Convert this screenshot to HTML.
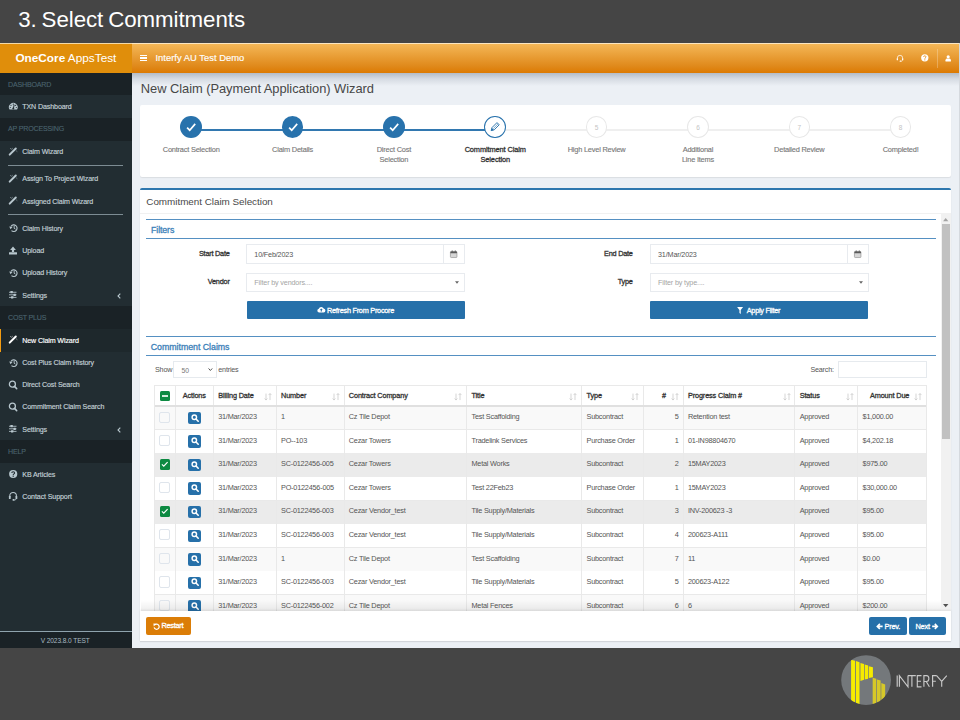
<!DOCTYPE html><html><head><meta charset="utf-8"><title>Select Commitments</title><style>
*{box-sizing:border-box;margin:0;padding:0}
html,body{width:960px;height:720px;overflow:hidden;background:#454545;font-family:"Liberation Sans",sans-serif}
.a{position:absolute}
.t{position:absolute;white-space:nowrap}
svg{position:absolute;overflow:visible}
.sh{color:#4b646f;font-size:7.1px;letter-spacing:-0.2px;-webkit-text-stroke:0.1px #4b646f}
.si{color:#c2d0d6;font-size:7.1px;letter-spacing:-0.12px;-webkit-text-stroke:0.15px currentColor}
</style></head><body>
<div class="t" style="left:18.2px;top:4.9px;line-height:30px;font-size:22.3px;color:#fff;letter-spacing:-0.06px;word-spacing:-1.2px">3. Select Commitments</div>
<div class="a" style="left:0px;top:43px;width:960px;height:605px;background:#ecf0f5"></div>
<div class="a" style="left:0px;top:43px;width:131.5px;height:29.6px;background:#e08e0b;border-top:1px solid #f3d9a8"></div>
<div class="a" style="left:131.5px;top:72.5px;width:828.5px;height:13.5px;background:linear-gradient(rgba(50,65,90,.30),rgba(50,65,90,.12) 45%,rgba(50,65,90,0))"></div>
<div class="a" style="left:131.5px;top:43px;width:828.5px;height:29.6px;background:linear-gradient(#f4b757,#e08a1c 75%,#dc7a02);border-top:1px solid #fbe6c2"></div>
<div class="t" style="left:15.4px;top:51.4px;line-height:14px;font-size:11.8px;color:#fff"><b>OneCore</b> AppsTest</div>
<div class="a" style="left:140.1px;top:54.9px;width:6.7px;height:1.4px;background:#fff"></div>
<div class="a" style="left:140.1px;top:57.2px;width:6.7px;height:1.4px;background:#fff"></div>
<div class="a" style="left:140.1px;top:59.5px;width:6.7px;height:1.4px;background:#fff"></div>
<div class="t" style="left:155.5px;top:52.2px;line-height:12px;font-size:9.4px;color:#fff;letter-spacing:0.02px;-webkit-text-stroke:0.15px #fff">Interfy AU Test Demo</div>
<div class="a" style="left:0px;top:72.6px;width:131.5px;height:575.4px;background:#222d32"></div>
<div class="a" style="left:0px;top:73px;width:131.5px;height:22.4px;background:#1a2226"></div>
<div class="t sh" style="left:8px;top:78.5px;line-height:12px;">DASHBOARD</div>
<div class="t si" style="left:22.3px;top:100.9px;line-height:12px;">TXN Dashboard</div>
<svg style="left:8px;top:101.3px;" width="10" height="10" viewBox="0 0 20 20"><path d="M3.1 17.2 A8.8 8.8 0 1 1 18.1 17.2 Z" fill="#b8c7ce"/><circle cx="10.6" cy="6.3" r="1.2" fill="#222d32"/><circle cx="6" cy="8.6" r="1.2" fill="#222d32"/><circle cx="15.2" cy="8.6" r="1.2" fill="#222d32"/><circle cx="4.6" cy="13" r="1.1" fill="#222d32"/><circle cx="16.6" cy="13" r="1.1" fill="#222d32"/><path d="M10.6 15.5 L12.4 7.5" stroke="#222d32" stroke-width="2"/><circle cx="10.6" cy="15" r="2" fill="#222d32"/></svg>
<div class="a" style="left:0px;top:117.5px;width:131.5px;height:23.3px;background:#1a2226"></div>
<div class="t sh" style="left:8px;top:123.45px;line-height:12px;">AP PROCESSING</div>
<div class="t si" style="left:22.3px;top:146.1px;line-height:12px;">Claim Wizard</div>
<svg style="left:8px;top:146.5px;" width="10" height="10" viewBox="0 0 20 20"><path d="M3.4 15.2 L15.6 3" stroke="#b8c7ce" stroke-width="4" stroke-linecap="round"/><path d="M4 2.2 L7.2 5.2 M8.6 1.8 L8.2 4.6 M16.4 7.6 L18.6 9.4" stroke="#b8c7ce" stroke-width="1.4" opacity=".7"/></svg>
<div class="a" style="left:8.3px;top:164.8px;width:114.7px;height:1px;background:#7d8c93"></div>
<div class="t si" style="left:22.3px;top:173.3px;line-height:12px;">Assign To Project Wizard</div>
<svg style="left:8px;top:173.7px;" width="10" height="10" viewBox="0 0 20 20"><path d="M3.4 15.2 L15.6 3" stroke="#b8c7ce" stroke-width="4" stroke-linecap="round"/><path d="M4 2.2 L7.2 5.2 M8.6 1.8 L8.2 4.6 M16.4 7.6 L18.6 9.4" stroke="#b8c7ce" stroke-width="1.4" opacity=".7"/></svg>
<div class="t si" style="left:22.3px;top:195.9px;line-height:12px;">Assigned Claim Wizard</div>
<svg style="left:8px;top:196.3px;" width="10" height="10" viewBox="0 0 20 20"><path d="M3.4 15.2 L15.6 3" stroke="#b8c7ce" stroke-width="4" stroke-linecap="round"/><path d="M4 2.2 L7.2 5.2 M8.6 1.8 L8.2 4.6 M16.4 7.6 L18.6 9.4" stroke="#b8c7ce" stroke-width="1.4" opacity=".7"/></svg>
<div class="a" style="left:8.3px;top:214px;width:114.7px;height:1px;background:#7d8c93"></div>
<div class="t si" style="left:22.3px;top:222.9px;line-height:12px;">Claim History</div>
<svg style="left:8px;top:223.3px;" width="10" height="10" viewBox="0 0 20 20"><path d="M6.2 6.5 A6.6 6.6 0 1 1 7 15.2" fill="none" stroke="#b8c7ce" stroke-width="2.3"/><path d="M2.6 7 L9.4 7.4 L5 12.4 Z" fill="#b8c7ce"/><path d="M12.3 6 L12.3 10.6 L15 12.2" fill="none" stroke="#b8c7ce" stroke-width="1.9"/></svg>
<div class="t si" style="left:22.3px;top:245.1px;line-height:12px;">Upload</div>
<svg style="left:8px;top:245.5px;" width="10" height="10" viewBox="0 0 20 20"><path d="M10 1 L15.8 8 L12.2 8 L12.2 12 L7.8 12 L7.8 8 L4.2 8 Z" fill="#b8c7ce"/><rect x="2" y="12.4" width="16" height="4.8" rx="0.6" fill="#b8c7ce"/></svg>
<div class="t si" style="left:22.3px;top:267.4px;line-height:12px;">Upload History</div>
<svg style="left:8px;top:267.8px;" width="10" height="10" viewBox="0 0 20 20"><path d="M6.2 6.5 A6.6 6.6 0 1 1 7 15.2" fill="none" stroke="#b8c7ce" stroke-width="2.3"/><path d="M2.6 7 L9.4 7.4 L5 12.4 Z" fill="#b8c7ce"/><path d="M12.3 6 L12.3 10.6 L15 12.2" fill="none" stroke="#b8c7ce" stroke-width="1.9"/></svg>
<div class="t si" style="left:22.3px;top:289.8px;line-height:12px;">Settings</div>
<svg style="left:8px;top:290.2px;" width="10" height="10" viewBox="0 0 20 20"><rect x="2" y="3.6" width="15" height="1.7" fill="#b8c7ce"/><rect x="2" y="8.8" width="15" height="1.7" fill="#b8c7ce"/><rect x="2" y="13.8" width="15" height="1.7" fill="#b8c7ce"/><rect x="5" y="2.2" width="4.6" height="4.5" rx=".5" fill="#b8c7ce"/><rect x="11" y="7.4" width="4.6" height="4.5" rx=".5" fill="#b8c7ce"/><rect x="6" y="12.4" width="4.6" height="4.5" rx=".5" fill="#b8c7ce"/></svg>
<svg style="left:116.8px;top:292.6px;" width="4" height="6" viewBox="0 0 4 6"><path d="M3.3 .6 L1 3 L3.3 5.4" fill="none" stroke="#b8c7ce" stroke-width="1.1"/></svg>
<div class="a" style="left:0px;top:306.2px;width:131.5px;height:22.7px;background:#1a2226"></div>
<div class="t sh" style="left:8px;top:311.85px;line-height:12px;">COST PLUS</div>
<div class="a" style="left:0px;top:329px;width:131.5px;height:22.6px;background:#1e282c;border-left:1.6px solid #f39c12"></div>
<div class="t si" style="left:22.3px;top:334.9px;line-height:12px;color:#fff">New Claim Wizard</div>
<svg style="left:8px;top:335.3px;" width="10" height="10" viewBox="0 0 20 20"><path d="M3.4 15.2 L15.6 3" stroke="#fff" stroke-width="4" stroke-linecap="round"/><path d="M4 2.2 L7.2 5.2 M8.6 1.8 L8.2 4.6 M16.4 7.6 L18.6 9.4" stroke="#fff" stroke-width="1.4" opacity=".7"/></svg>
<div class="t si" style="left:22.3px;top:357.2px;line-height:12px;">Cost Plus Claim History</div>
<svg style="left:8px;top:357.6px;" width="10" height="10" viewBox="0 0 20 20"><path d="M6.2 6.5 A6.6 6.6 0 1 1 7 15.2" fill="none" stroke="#b8c7ce" stroke-width="2.3"/><path d="M2.6 7 L9.4 7.4 L5 12.4 Z" fill="#b8c7ce"/><path d="M12.3 6 L12.3 10.6 L15 12.2" fill="none" stroke="#b8c7ce" stroke-width="1.9"/></svg>
<div class="t si" style="left:22.3px;top:379.2px;line-height:12px;">Direct Cost Search</div>
<svg style="left:8px;top:379.6px;" width="10" height="10" viewBox="0 0 20 20"><circle cx="8.8" cy="8.4" r="6" fill="none" stroke="#b8c7ce" stroke-width="2.6"/><path d="M13 12.8 L17.4 17.2" stroke="#b8c7ce" stroke-width="3" stroke-linecap="round"/></svg>
<div class="t si" style="left:22.3px;top:401.3px;line-height:12px;">Commitment Claim Search</div>
<svg style="left:8px;top:401.7px;" width="10" height="10" viewBox="0 0 20 20"><circle cx="8.8" cy="8.4" r="6" fill="none" stroke="#b8c7ce" stroke-width="2.6"/><path d="M13 12.8 L17.4 17.2" stroke="#b8c7ce" stroke-width="3" stroke-linecap="round"/></svg>
<div class="t si" style="left:22.3px;top:423.8px;line-height:12px;">Settings</div>
<svg style="left:8px;top:424.2px;" width="10" height="10" viewBox="0 0 20 20"><rect x="2" y="3.6" width="15" height="1.7" fill="#b8c7ce"/><rect x="2" y="8.8" width="15" height="1.7" fill="#b8c7ce"/><rect x="2" y="13.8" width="15" height="1.7" fill="#b8c7ce"/><rect x="5" y="2.2" width="4.6" height="4.5" rx=".5" fill="#b8c7ce"/><rect x="11" y="7.4" width="4.6" height="4.5" rx=".5" fill="#b8c7ce"/><rect x="6" y="12.4" width="4.6" height="4.5" rx=".5" fill="#b8c7ce"/></svg>
<svg style="left:116.8px;top:426.6px;" width="4" height="6" viewBox="0 0 4 6"><path d="M3.3 .6 L1 3 L3.3 5.4" fill="none" stroke="#b8c7ce" stroke-width="1.1"/></svg>
<div class="a" style="left:0px;top:440px;width:131.5px;height:22.5px;background:#1a2226"></div>
<div class="t sh" style="left:8px;top:445.55px;line-height:12px;">HELP</div>
<div class="t si" style="left:22.3px;top:468.8px;line-height:12px;">KB Articles</div>
<svg style="left:8px;top:469.2px;" width="10" height="10" viewBox="0 0 20 20"><circle cx="10.4" cy="10" r="8.2" fill="#b8c7ce"/><path d="M7.6 7.8 C7.6 4.6 13.2 4.6 13.2 7.8 C13.2 9.8 10.4 9.6 10.4 12" fill="none" stroke="#222d32" stroke-width="2.2"/><rect x="9.2" y="13.2" width="2.4" height="2.4" fill="#222d32"/></svg>
<div class="t si" style="left:22.3px;top:490.8px;line-height:12px;">Contact Support</div>
<svg style="left:8px;top:491.2px;" width="10" height="10" viewBox="0 0 20 20"><path d="M3.6 12.5 L3.6 9.6 A6.6 6.6 0 0 1 16.8 9.6 L16.8 12.5" fill="none" stroke="#b8c7ce" stroke-width="2.2"/><rect x="1.8" y="10" width="3.6" height="6" rx="1.2" fill="#b8c7ce"/><rect x="15" y="10" width="3.6" height="6" rx="1.2" fill="#b8c7ce"/><path d="M16.2 15.5 Q16 18.2 12.5 18.2" fill="none" stroke="#b8c7ce" stroke-width="1.6"/><rect x="9" y="16.2" width="4.2" height="3.2" rx="1.2" fill="#b8c7ce"/></svg>
<div class="a" style="left:0px;top:631.2px;width:131.5px;height:1px;background:#8fa3ad"></div>
<div class="a" style="left:0px;top:632.2px;width:131.5px;height:15.8px;background:#1a2226"></div>
<div class="t" style="left:5.2px;width:120px;text-align:center;top:636.4px;line-height:10px;font-size:6.6px;color:#a9b9c1;letter-spacing:-0.1px">V 2023.8.0 TEST</div>
<div class="t" style="left:140.8px;top:81.4px;line-height:16px;font-size:12.9px;color:#474747;letter-spacing:-0.05px">New Claim (Payment Application) Wizard</div>
<div class="a" style="left:140.2px;top:104.6px;width:810.8px;height:72.4px;background:#fff;border-radius:2px;box-shadow:0 1px 1px rgba(0,0,0,.08)"></div>
<div class="a" style="left:191.2px;top:129.2px;width:304.05px;height:1.9px;background:#3278b0"></div>
<div class="a" style="left:495.25px;top:129.4px;width:405.4px;height:1.4px;background:#efefef"></div>
<div class="a" style="left:180.3px;top:116.4px;width:21.8px;height:21.8px;background:#2872ac;border-radius:50%"></div>
<svg style="left:186.2px;top:122.8px;" width="10" height="9" viewBox="0 0 20 18"><path d="M2.2 9.4 L7.4 14.4 L18.4 1.8" fill="none" stroke="#fff" stroke-width="3.4"/></svg>
<div class="a" style="left:281.65px;top:116.4px;width:21.8px;height:21.8px;background:#2872ac;border-radius:50%"></div>
<svg style="left:287.55px;top:122.8px;" width="10" height="9" viewBox="0 0 20 18"><path d="M2.2 9.4 L7.4 14.4 L18.4 1.8" fill="none" stroke="#fff" stroke-width="3.4"/></svg>
<div class="a" style="left:383px;top:116.4px;width:21.8px;height:21.8px;background:#2872ac;border-radius:50%"></div>
<svg style="left:388.9px;top:122.8px;" width="10" height="9" viewBox="0 0 20 18"><path d="M2.2 9.4 L7.4 14.4 L18.4 1.8" fill="none" stroke="#fff" stroke-width="3.4"/></svg>
<div class="a" style="left:484.45px;top:116.4px;width:21.6px;height:21.8px;background:#fff;border:1.3px solid #2872ac;border-radius:50%"></div>
<svg style="left:490.15px;top:121.1px;" width="10.6" height="10.6" viewBox="0 0 20 20"><path d="M2.2 18.2 L3.8 12.4 L13.2 3 L17.4 7.2 L8 16.6 Z" fill="none" stroke="#2872ac" stroke-width="1.8" stroke-linejoin="round"/><path d="M6.2 14.4 L15.2 5.4" stroke="#2872ac" stroke-width="1.1"/><path d="M2.2 18.2 L3.6 13.2 L7.2 16.8 Z" fill="#2872ac"/></svg>
<div class="a" style="left:585.8px;top:116.4px;width:21.6px;height:21.8px;background:#fff;border:1px solid #e8e8e8;border-radius:50%"></div>
<div class="t" style="left:586.6px;width:20px;text-align:center;top:123px;line-height:10px;font-size:6.5px;color:#c4c4c4">5</div>
<div class="a" style="left:687.15px;top:116.4px;width:21.6px;height:21.8px;background:#fff;border:1px solid #e8e8e8;border-radius:50%"></div>
<div class="t" style="left:687.95px;width:20px;text-align:center;top:123px;line-height:10px;font-size:6.5px;color:#c4c4c4">6</div>
<div class="a" style="left:788.5px;top:116.4px;width:21.6px;height:21.8px;background:#fff;border:1px solid #e8e8e8;border-radius:50%"></div>
<div class="t" style="left:789.3px;width:20px;text-align:center;top:123px;line-height:10px;font-size:6.5px;color:#c4c4c4">7</div>
<div class="a" style="left:889.85px;top:116.4px;width:21.6px;height:21.8px;background:#fff;border:1px solid #e8e8e8;border-radius:50%"></div>
<div class="t" style="left:890.65px;width:20px;text-align:center;top:123px;line-height:10px;font-size:6.5px;color:#c4c4c4">8</div>
<div class="t" style="left:141.2px;width:100px;text-align:center;top:144.8px;line-height:10px;font-size:7.4px;letter-spacing:-0.2px;color:#777;-webkit-text-stroke:0.12px #777">Contract Selection</div>
<div class="t" style="left:242.55px;width:100px;text-align:center;top:144.8px;line-height:10px;font-size:7.4px;letter-spacing:-0.2px;color:#777;-webkit-text-stroke:0.12px #777">Claim Details</div>
<div class="t" style="left:343.9px;width:100px;text-align:center;top:144.8px;line-height:10px;font-size:7.4px;letter-spacing:-0.2px;color:#777;-webkit-text-stroke:0.12px #777">Direct Cost</div>
<div class="t" style="left:343.9px;width:100px;text-align:center;top:155.3px;line-height:10px;font-size:7.4px;letter-spacing:-0.2px;color:#777;-webkit-text-stroke:0.12px #777">Selection</div>
<div class="t" style="left:445.25px;width:100px;text-align:center;top:144.8px;line-height:10px;font-size:7.4px;letter-spacing:-0.2px;color:#333;letter-spacing:-0.1px;-webkit-text-stroke:0.3px #333">Commitment Claim</div>
<div class="t" style="left:445.25px;width:100px;text-align:center;top:155.3px;line-height:10px;font-size:7.4px;letter-spacing:-0.2px;color:#333;letter-spacing:-0.1px;-webkit-text-stroke:0.3px #333">Selection</div>
<div class="t" style="left:546.6px;width:100px;text-align:center;top:144.8px;line-height:10px;font-size:7.4px;letter-spacing:-0.2px;color:#777;-webkit-text-stroke:0.12px #777">High Level Review</div>
<div class="t" style="left:647.95px;width:100px;text-align:center;top:144.8px;line-height:10px;font-size:7.4px;letter-spacing:-0.2px;color:#777;-webkit-text-stroke:0.12px #777">Additional</div>
<div class="t" style="left:647.95px;width:100px;text-align:center;top:155.3px;line-height:10px;font-size:7.4px;letter-spacing:-0.2px;color:#777;-webkit-text-stroke:0.12px #777">Line Items</div>
<div class="t" style="left:749.3px;width:100px;text-align:center;top:144.8px;line-height:10px;font-size:7.4px;letter-spacing:-0.2px;color:#777;-webkit-text-stroke:0.12px #777">Detailed Review</div>
<div class="t" style="left:850.65px;width:100px;text-align:center;top:144.8px;line-height:10px;font-size:7.4px;letter-spacing:-0.2px;color:#777;-webkit-text-stroke:0.12px #777">Completed!</div>
<div class="a" style="left:140.2px;top:189px;width:810.8px;height:452px;background:#fff;box-shadow:0 1px 1px rgba(0,0,0,.1)"></div>
<div class="a" style="left:140.2px;top:188.3px;width:810.8px;height:1.8px;background:#2e77ae;border-radius:2px 2px 0 0"></div>
<div class="t" style="left:146.3px;top:194.9px;line-height:14px;font-size:9.9px;color:#484848;letter-spacing:-0.03px">Commitment Claim Selection</div>
<div class="a" style="left:140.2px;top:213px;width:810.8px;height:0.8px;background:#f1f1f1"></div>
<div class="a" style="left:146px;top:218.9px;width:789.5px;height:1.3px;background:#5590c2"></div>
<div class="t" style="left:151px;top:223.6px;line-height:12px;font-size:8.8px;color:#3b80b8;letter-spacing:-0.1px;-webkit-text-stroke:0.3px #3b80b8">Filters</div>
<div class="a" style="left:146px;top:237.7px;width:789.5px;height:1.3px;background:#5590c2"></div>
<div class="t" style="left:149.6px;width:80px;text-align:right;top:248.6px;line-height:10px;font-size:7.3px;color:#333;letter-spacing:-0.22px;-webkit-text-stroke:0.3px #333">Start Date</div>
<div class="a" style="left:246.3px;top:244.3px;width:218.8px;height:19.3px;background:#fff;border:1px solid #e8ebef"></div>
<div class="a" style="left:442.9px;top:244.3px;width:22.2px;height:19.3px;background:#fff;border:1px solid #e8ebef"></div>
<div class="t" style="left:254.3px;top:250.3px;line-height:10px;font-size:7.2px;color:#555;letter-spacing:-0.15px">10/Feb/2023</div>
<svg style="left:450.2px;top:250px;" width="7.4" height="8" viewBox="0 0 14 15"><rect x="0.8" y="2.6" width="12.4" height="11.6" rx="1.6" fill="#d6d6d6" stroke="#8c8c8c" stroke-width="1.2"/><rect x="0.8" y="2.6" width="12.4" height="3.4" rx="1" fill="#5a5a5a"/><rect x="3.2" y="0.4" width="1.8" height="3.4" rx=".8" fill="#5a5a5a"/><rect x="9" y="0.4" width="1.8" height="3.4" rx=".8" fill="#5a5a5a"/></svg>
<div class="t" style="left:149.6px;width:80px;text-align:right;top:277px;line-height:10px;font-size:7.3px;color:#333;letter-spacing:-0.22px;-webkit-text-stroke:0.3px #333">Vendor</div>
<div class="a" style="left:246.3px;top:273px;width:218.8px;height:19.2px;background:#fff;border:1px solid #e8ebef"></div>
<div class="t" style="left:254.3px;top:277.5px;line-height:10px;font-size:7.2px;color:#a4a4a4;letter-spacing:-0.15px">Filter by vendors....</div>
<svg style="left:454.8px;top:281.2px;" width="4" height="3" viewBox="0 0 8 5"><path d="M0 0 L8 0 L4 5 Z" fill="#666"/></svg>
<div class="t" style="left:552.7px;width:80px;text-align:right;top:248.6px;line-height:10px;font-size:7.3px;color:#333;letter-spacing:-0.22px;-webkit-text-stroke:0.3px #333">End Date</div>
<div class="a" style="left:650px;top:244.3px;width:218.8px;height:19.3px;background:#fff;border:1px solid #e8ebef"></div>
<div class="a" style="left:846.6px;top:244.3px;width:22.2px;height:19.3px;background:#fff;border:1px solid #e8ebef"></div>
<div class="t" style="left:658px;top:250.3px;line-height:10px;font-size:7.2px;color:#555;letter-spacing:-0.15px">31/Mar/2023</div>
<svg style="left:853.9px;top:250px;" width="7.4" height="8" viewBox="0 0 14 15"><rect x="0.8" y="2.6" width="12.4" height="11.6" rx="1.6" fill="#d6d6d6" stroke="#8c8c8c" stroke-width="1.2"/><rect x="0.8" y="2.6" width="12.4" height="3.4" rx="1" fill="#5a5a5a"/><rect x="3.2" y="0.4" width="1.8" height="3.4" rx=".8" fill="#5a5a5a"/><rect x="9" y="0.4" width="1.8" height="3.4" rx=".8" fill="#5a5a5a"/></svg>
<div class="t" style="left:552.7px;width:80px;text-align:right;top:277px;line-height:10px;font-size:7.3px;color:#333;letter-spacing:-0.22px;-webkit-text-stroke:0.3px #333">Type</div>
<div class="a" style="left:650px;top:273px;width:218.8px;height:19.2px;background:#fff;border:1px solid #e8ebef"></div>
<div class="t" style="left:658px;top:277.5px;line-height:10px;font-size:7.2px;color:#a4a4a4;letter-spacing:-0.15px">Filter by type....</div>
<svg style="left:858.5px;top:281.2px;" width="4" height="3" viewBox="0 0 8 5"><path d="M0 0 L8 0 L4 5 Z" fill="#666"/></svg>
<div class="a" style="left:246.5px;top:301px;width:218.2px;height:17.8px;background:#2670a9;border-radius:1px"></div>
<div class="a" style="left:650px;top:301px;width:218.1px;height:17.8px;background:#2670a9;border-radius:1px"></div>
<div class="t" style="left:300.5px;width:120px;text-align:center;top:305.8px;line-height:10px;font-size:7.3px;color:#fff;letter-spacing:-0.25px;-webkit-text-stroke:0.3px #fff">Refresh From Procore</div>
<svg style="left:317px;top:306.4px;" width="8.6" height="6.7" viewBox="0 0 18 14"><path d="M4.5 13.5 A4 4 0 0 1 3.8 5.6 A5.5 5.5 0 0 1 14 5 A4.3 4.3 0 0 1 14 13.5 Z" fill="#fff"/><path d="M9 5 L12.2 8.3 L10.2 8.3 L10.2 11.5 L7.8 11.5 L7.8 8.3 L5.8 8.3 Z" fill="#2670a9"/></svg>
<div class="t" style="left:703.5px;width:120px;text-align:center;top:305.8px;line-height:10px;font-size:7.3px;color:#fff;letter-spacing:-0.25px;-webkit-text-stroke:0.3px #fff">Apply Filter</div>
<svg style="left:736.8px;top:306.6px;" width="6.2" height="7" viewBox="0 0 12 14"><path d="M0 0 L12 0 L7.3 6 L7.3 14 L4.7 12 L4.7 6 Z" fill="#fff"/></svg>
<div class="a" style="left:146px;top:336.1px;width:789.5px;height:1.3px;background:#5590c2"></div>
<div class="t" style="left:150.8px;top:340.8px;line-height:12px;font-size:8.8px;color:#3b80b8;letter-spacing:-0.03px;-webkit-text-stroke:0.3px #3b80b8">Commitment Claims</div>
<div class="a" style="left:146px;top:354.8px;width:789.5px;height:1.3px;background:#5590c2"></div>
<div class="t" style="left:155px;top:365.3px;line-height:10px;font-size:7.2px;color:#555;letter-spacing:-0.2px">Show</div>
<div class="a" style="left:173.3px;top:361.3px;width:43.4px;height:17px;background:#fff;border:1px solid #e6eaee"></div>
<div class="t" style="left:181.6px;top:365.8px;line-height:10px;font-size:6.8px;color:#777">50</div>
<svg style="left:208.3px;top:368.4px;" width="4.8" height="3.2" viewBox="0 0 10 7"><path d="M1 1 L5 5.4 L9 1" fill="none" stroke="#444" stroke-width="2"/></svg>
<div class="t" style="left:218.3px;top:365.3px;line-height:10px;font-size:7.2px;color:#555;letter-spacing:-0.2px">entries</div>
<div class="t" style="left:773.8px;width:60px;text-align:right;top:365.2px;line-height:10px;font-size:7.2px;color:#555;letter-spacing:-0.2px">Search:</div>
<div class="a" style="left:838.2px;top:361.1px;width:88.4px;height:17.2px;background:#fff;border:1px solid #e6eaee"></div>
<div class="a" style="left:141px;top:380px;width:800px;height:231px;overflow:hidden">
<div class="a" style="left:13.5px;top:5px;width:771.8px;height:21.4px;background:#fff"></div>
<div class="a" style="left:18.6px;top:10.8px;width:10.8px;height:10.2px;background:#0d8a42;border-radius:1.5px"></div>
<div class="a" style="left:20.9px;top:15.2px;width:6.6px;height:1.5px;background:#d2eadb"></div>
<div class="t" style="left:33.3px;width:40px;text-align:center;top:11px;line-height:10px;font-size:7.3px;color:#333;letter-spacing:-0.12px;-webkit-text-stroke:0.3px #333">Actions</div>
<div class="t" style="left:77.2px;top:11px;line-height:10px;font-size:7.3px;color:#333;letter-spacing:-0.12px;-webkit-text-stroke:0.3px #333">Billing Date</div>
<svg style="left:122.9px;top:12.5px;" width="8" height="7.6" viewBox="0 0 16 15"><path d="M4 1 L4 14 M1.2 11 L4 14 L6.8 11" fill="none" stroke="#cdcdcd" stroke-width="1.7"/><path d="M12 14 L12 1 M9.2 4 L12 1 L14.8 4" fill="none" stroke="#cdcdcd" stroke-width="1.7"/></svg>
<div class="t" style="left:140px;top:11px;line-height:10px;font-size:7.3px;color:#333;letter-spacing:-0.12px;-webkit-text-stroke:0.3px #333">Number</div>
<svg style="left:190.7px;top:12.5px;" width="8" height="7.6" viewBox="0 0 16 15"><path d="M4 1 L4 14 M1.2 11 L4 14 L6.8 11" fill="none" stroke="#cdcdcd" stroke-width="1.7"/><path d="M12 14 L12 1 M9.2 4 L12 1 L14.8 4" fill="none" stroke="#cdcdcd" stroke-width="1.7"/></svg>
<div class="t" style="left:207.8px;top:11px;line-height:10px;font-size:7.3px;color:#333;letter-spacing:-0.12px;-webkit-text-stroke:0.3px #333">Contract Company</div>
<svg style="left:313.4px;top:12.5px;" width="8" height="7.6" viewBox="0 0 16 15"><path d="M4 1 L4 14 M1.2 11 L4 14 L6.8 11" fill="none" stroke="#cdcdcd" stroke-width="1.7"/><path d="M12 14 L12 1 M9.2 4 L12 1 L14.8 4" fill="none" stroke="#cdcdcd" stroke-width="1.7"/></svg>
<div class="t" style="left:330.5px;top:11px;line-height:10px;font-size:7.3px;color:#333;letter-spacing:-0.12px;-webkit-text-stroke:0.3px #333">Title</div>
<svg style="left:428.4px;top:12.5px;" width="8" height="7.6" viewBox="0 0 16 15"><path d="M4 1 L4 14 M1.2 11 L4 14 L6.8 11" fill="none" stroke="#cdcdcd" stroke-width="1.7"/><path d="M12 14 L12 1 M9.2 4 L12 1 L14.8 4" fill="none" stroke="#cdcdcd" stroke-width="1.7"/></svg>
<div class="t" style="left:445.5px;top:11px;line-height:10px;font-size:7.3px;color:#333;letter-spacing:-0.12px;-webkit-text-stroke:0.3px #333">Type</div>
<svg style="left:489.7px;top:12.5px;" width="8" height="7.6" viewBox="0 0 16 15"><path d="M4 1 L4 14 M1.2 11 L4 14 L6.8 11" fill="none" stroke="#cdcdcd" stroke-width="1.7"/><path d="M12 14 L12 1 M9.2 4 L12 1 L14.8 4" fill="none" stroke="#cdcdcd" stroke-width="1.7"/></svg>
<div class="t" style="left:546.9px;top:11px;line-height:10px;font-size:7.3px;color:#333;letter-spacing:-0.12px;-webkit-text-stroke:0.3px #333">Progress Claim #</div>
<svg style="left:641.6px;top:12.5px;" width="8" height="7.6" viewBox="0 0 16 15"><path d="M4 1 L4 14 M1.2 11 L4 14 L6.8 11" fill="none" stroke="#cdcdcd" stroke-width="1.7"/><path d="M12 14 L12 1 M9.2 4 L12 1 L14.8 4" fill="none" stroke="#cdcdcd" stroke-width="1.7"/></svg>
<div class="t" style="left:658.7px;top:11px;line-height:10px;font-size:7.3px;color:#333;letter-spacing:-0.12px;-webkit-text-stroke:0.3px #333">Status</div>
<svg style="left:704.5px;top:12.5px;" width="8" height="7.6" viewBox="0 0 16 15"><path d="M4 1 L4 14 M1.2 11 L4 14 L6.8 11" fill="none" stroke="#cdcdcd" stroke-width="1.7"/><path d="M12 14 L12 1 M9.2 4 L12 1 L14.8 4" fill="none" stroke="#cdcdcd" stroke-width="1.7"/></svg>
<div class="t" style="left:504.9px;width:20px;text-align:right;top:11px;line-height:10px;font-size:7.3px;color:#333;letter-spacing:-0.12px;-webkit-text-stroke:0.3px #333">#</div>
<svg style="left:529.8px;top:12.5px;" width="8" height="7.6" viewBox="0 0 16 15"><path d="M4 1 L4 14 M1.2 11 L4 14 L6.8 11" fill="none" stroke="#cdcdcd" stroke-width="1.7"/><path d="M12 14 L12 1 M9.2 4 L12 1 L14.8 4" fill="none" stroke="#cdcdcd" stroke-width="1.7"/></svg>
<div class="t" style="left:688.3px;width:80px;text-align:right;top:11px;line-height:10px;font-size:7.3px;color:#333;letter-spacing:-0.12px;-webkit-text-stroke:0.3px #333">Amount Due</div>
<svg style="left:773px;top:12.5px;" width="8" height="7.6" viewBox="0 0 16 15"><path d="M4 1 L4 14 M1.2 11 L4 14 L6.8 11" fill="none" stroke="#cdcdcd" stroke-width="1.7"/><path d="M12 14 L12 1 M9.2 4 L12 1 L14.8 4" fill="none" stroke="#cdcdcd" stroke-width="1.7"/></svg>
<div class="a" style="left:13.5px;top:26.4px;width:771.8px;height:23.54px;background:#f9f9f9"></div>
<div class="a" style="left:13.5px;top:49.44px;width:771.8px;height:1px;background:#e9e9e9"></div>
<div class="a" style="left:18.3px;top:31.57px;width:11.2px;height:11.2px;border:1px solid #dfe5ec;border-radius:2px"></div>
<div class="a" style="left:46.6px;top:31.87px;width:13.5px;height:12.4px;background:#2670a9;border-radius:2px"></div>
<svg style="left:49.5px;top:33.67px;" width="8" height="8" viewBox="0 0 14 14"><circle cx="5.8" cy="5.8" r="3.9" fill="none" stroke="#fff" stroke-width="2.5"/><path d="M8.8 8.8 L12.6 12.6" stroke="#fff" stroke-width="2.8" stroke-linecap="round"/></svg>
<div class="t" style="left:77.2px;top:32.27px;line-height:10px;font-size:7.3px;color:#555;letter-spacing:-0.22px">31/Mar/2023</div>
<div class="t" style="left:140px;top:32.27px;line-height:10px;font-size:7.3px;color:#555;letter-spacing:-0.22px">1</div>
<div class="t" style="left:207.8px;top:32.27px;line-height:10px;font-size:7.3px;color:#555;letter-spacing:-0.22px">Cz Tile Depot</div>
<div class="t" style="left:330.5px;top:32.27px;line-height:10px;font-size:7.3px;color:#555;letter-spacing:-0.22px">Test Scaffolding</div>
<div class="t" style="left:445.5px;top:32.27px;line-height:10px;font-size:7.3px;color:#555;letter-spacing:-0.22px">Subcontract</div>
<div class="t" style="left:507.6px;width:30px;text-align:right;top:32.27px;line-height:10px;font-size:7.3px;color:#555;letter-spacing:-0.22px">5</div>
<div class="t" style="left:546.9px;top:32.27px;line-height:10px;font-size:7.3px;color:#555;letter-spacing:-0.22px">Retention test</div>
<div class="t" style="left:658.7px;top:32.27px;line-height:10px;font-size:7.3px;color:#555;letter-spacing:-0.22px">Approved</div>
<div class="t" style="left:721.6px;top:32.27px;line-height:10px;font-size:7.3px;color:#555;letter-spacing:-0.22px">$1,000.00</div>
<div class="a" style="left:13.5px;top:49.94px;width:771.8px;height:23.54px;background:#fff"></div>
<div class="a" style="left:13.5px;top:72.98px;width:771.8px;height:1px;background:#e9e9e9"></div>
<div class="a" style="left:18.3px;top:55.11px;width:11.2px;height:11.2px;border:1px solid #dfe5ec;border-radius:2px"></div>
<div class="a" style="left:46.6px;top:55.41px;width:13.5px;height:12.4px;background:#2670a9;border-radius:2px"></div>
<svg style="left:49.5px;top:57.21px;" width="8" height="8" viewBox="0 0 14 14"><circle cx="5.8" cy="5.8" r="3.9" fill="none" stroke="#fff" stroke-width="2.5"/><path d="M8.8 8.8 L12.6 12.6" stroke="#fff" stroke-width="2.8" stroke-linecap="round"/></svg>
<div class="t" style="left:77.2px;top:55.81px;line-height:10px;font-size:7.3px;color:#555;letter-spacing:-0.22px">31/Mar/2023</div>
<div class="t" style="left:140px;top:55.81px;line-height:10px;font-size:7.3px;color:#555;letter-spacing:-0.22px">PO--103</div>
<div class="t" style="left:207.8px;top:55.81px;line-height:10px;font-size:7.3px;color:#555;letter-spacing:-0.22px">Cezar Towers</div>
<div class="t" style="left:330.5px;top:55.81px;line-height:10px;font-size:7.3px;color:#555;letter-spacing:-0.22px">Tradelink Services</div>
<div class="t" style="left:445.5px;top:55.81px;line-height:10px;font-size:7.3px;color:#555;letter-spacing:-0.22px">Purchase Order</div>
<div class="t" style="left:507.6px;width:30px;text-align:right;top:55.81px;line-height:10px;font-size:7.3px;color:#555;letter-spacing:-0.22px">1</div>
<div class="t" style="left:546.9px;top:55.81px;line-height:10px;font-size:7.3px;color:#555;letter-spacing:-0.22px">01-IN98804670</div>
<div class="t" style="left:658.7px;top:55.81px;line-height:10px;font-size:7.3px;color:#555;letter-spacing:-0.22px">Approved</div>
<div class="t" style="left:721.6px;top:55.81px;line-height:10px;font-size:7.3px;color:#555;letter-spacing:-0.22px">$4,202.18</div>
<div class="a" style="left:13.5px;top:73.48px;width:771.8px;height:23.54px;background:#ebebeb"></div>
<div class="a" style="left:13.5px;top:96.52px;width:771.8px;height:1px;background:#e9e9e9"></div>
<div class="a" style="left:18.7px;top:79.05px;width:10.6px;height:10.7px;background:#0d8a42;border-radius:1.5px"></div>
<svg style="left:20.2px;top:80.85px;" width="7.5" height="6.5" viewBox="0 0 15 13"><path d="M1.8 6.8 L5.5 10.3 L13.2 2.3" fill="none" stroke="#fff" stroke-width="2.3"/></svg>
<div class="a" style="left:46.6px;top:78.95px;width:13.5px;height:12.4px;background:#2670a9;border-radius:2px"></div>
<svg style="left:49.5px;top:80.75px;" width="8" height="8" viewBox="0 0 14 14"><circle cx="5.8" cy="5.8" r="3.9" fill="none" stroke="#fff" stroke-width="2.5"/><path d="M8.8 8.8 L12.6 12.6" stroke="#fff" stroke-width="2.8" stroke-linecap="round"/></svg>
<div class="t" style="left:77.2px;top:79.35px;line-height:10px;font-size:7.3px;color:#555;letter-spacing:-0.22px">31/Mar/2023</div>
<div class="t" style="left:140px;top:79.35px;line-height:10px;font-size:7.3px;color:#555;letter-spacing:-0.22px">SC-0122456-005</div>
<div class="t" style="left:207.8px;top:79.35px;line-height:10px;font-size:7.3px;color:#555;letter-spacing:-0.22px">Cezar Towers</div>
<div class="t" style="left:330.5px;top:79.35px;line-height:10px;font-size:7.3px;color:#555;letter-spacing:-0.22px">Metal Works</div>
<div class="t" style="left:445.5px;top:79.35px;line-height:10px;font-size:7.3px;color:#555;letter-spacing:-0.22px">Subcontract</div>
<div class="t" style="left:507.6px;width:30px;text-align:right;top:79.35px;line-height:10px;font-size:7.3px;color:#555;letter-spacing:-0.22px">2</div>
<div class="t" style="left:546.9px;top:79.35px;line-height:10px;font-size:7.3px;color:#555;letter-spacing:-0.22px">15MAY2023</div>
<div class="t" style="left:658.7px;top:79.35px;line-height:10px;font-size:7.3px;color:#555;letter-spacing:-0.22px">Approved</div>
<div class="t" style="left:721.6px;top:79.35px;line-height:10px;font-size:7.3px;color:#555;letter-spacing:-0.22px">$975.00</div>
<div class="a" style="left:13.5px;top:97.02px;width:771.8px;height:23.54px;background:#fff"></div>
<div class="a" style="left:13.5px;top:120.06px;width:771.8px;height:1px;background:#e9e9e9"></div>
<div class="a" style="left:18.3px;top:102.19px;width:11.2px;height:11.2px;border:1px solid #dfe5ec;border-radius:2px"></div>
<div class="a" style="left:46.6px;top:102.49px;width:13.5px;height:12.4px;background:#2670a9;border-radius:2px"></div>
<svg style="left:49.5px;top:104.29px;" width="8" height="8" viewBox="0 0 14 14"><circle cx="5.8" cy="5.8" r="3.9" fill="none" stroke="#fff" stroke-width="2.5"/><path d="M8.8 8.8 L12.6 12.6" stroke="#fff" stroke-width="2.8" stroke-linecap="round"/></svg>
<div class="t" style="left:77.2px;top:102.89px;line-height:10px;font-size:7.3px;color:#555;letter-spacing:-0.22px">31/Mar/2023</div>
<div class="t" style="left:140px;top:102.89px;line-height:10px;font-size:7.3px;color:#555;letter-spacing:-0.22px">PO-0122456-005</div>
<div class="t" style="left:207.8px;top:102.89px;line-height:10px;font-size:7.3px;color:#555;letter-spacing:-0.22px">Cezar Towers</div>
<div class="t" style="left:330.5px;top:102.89px;line-height:10px;font-size:7.3px;color:#555;letter-spacing:-0.22px">Test 22Feb23</div>
<div class="t" style="left:445.5px;top:102.89px;line-height:10px;font-size:7.3px;color:#555;letter-spacing:-0.22px">Purchase Order</div>
<div class="t" style="left:507.6px;width:30px;text-align:right;top:102.89px;line-height:10px;font-size:7.3px;color:#555;letter-spacing:-0.22px">1</div>
<div class="t" style="left:546.9px;top:102.89px;line-height:10px;font-size:7.3px;color:#555;letter-spacing:-0.22px">15MAY2023</div>
<div class="t" style="left:658.7px;top:102.89px;line-height:10px;font-size:7.3px;color:#555;letter-spacing:-0.22px">Approved</div>
<div class="t" style="left:721.6px;top:102.89px;line-height:10px;font-size:7.3px;color:#555;letter-spacing:-0.22px">$30,000.00</div>
<div class="a" style="left:13.5px;top:120.56px;width:771.8px;height:23.54px;background:#ebebeb"></div>
<div class="a" style="left:13.5px;top:143.6px;width:771.8px;height:1px;background:#e9e9e9"></div>
<div class="a" style="left:18.7px;top:126.13px;width:10.6px;height:10.7px;background:#0d8a42;border-radius:1.5px"></div>
<svg style="left:20.2px;top:127.93px;" width="7.5" height="6.5" viewBox="0 0 15 13"><path d="M1.8 6.8 L5.5 10.3 L13.2 2.3" fill="none" stroke="#fff" stroke-width="2.3"/></svg>
<div class="a" style="left:46.6px;top:126.03px;width:13.5px;height:12.4px;background:#2670a9;border-radius:2px"></div>
<svg style="left:49.5px;top:127.83px;" width="8" height="8" viewBox="0 0 14 14"><circle cx="5.8" cy="5.8" r="3.9" fill="none" stroke="#fff" stroke-width="2.5"/><path d="M8.8 8.8 L12.6 12.6" stroke="#fff" stroke-width="2.8" stroke-linecap="round"/></svg>
<div class="t" style="left:77.2px;top:126.43px;line-height:10px;font-size:7.3px;color:#555;letter-spacing:-0.22px">31/Mar/2023</div>
<div class="t" style="left:140px;top:126.43px;line-height:10px;font-size:7.3px;color:#555;letter-spacing:-0.22px">SC-0122456-003</div>
<div class="t" style="left:207.8px;top:126.43px;line-height:10px;font-size:7.3px;color:#555;letter-spacing:-0.22px">Cezar Vendor_test</div>
<div class="t" style="left:330.5px;top:126.43px;line-height:10px;font-size:7.3px;color:#555;letter-spacing:-0.22px">Tile Supply/Materials</div>
<div class="t" style="left:445.5px;top:126.43px;line-height:10px;font-size:7.3px;color:#555;letter-spacing:-0.22px">Subcontract</div>
<div class="t" style="left:507.6px;width:30px;text-align:right;top:126.43px;line-height:10px;font-size:7.3px;color:#555;letter-spacing:-0.22px">3</div>
<div class="t" style="left:546.9px;top:126.43px;line-height:10px;font-size:7.3px;color:#555;letter-spacing:-0.22px">INV-200623 -3</div>
<div class="t" style="left:658.7px;top:126.43px;line-height:10px;font-size:7.3px;color:#555;letter-spacing:-0.22px">Approved</div>
<div class="t" style="left:721.6px;top:126.43px;line-height:10px;font-size:7.3px;color:#555;letter-spacing:-0.22px">$95.00</div>
<div class="a" style="left:13.5px;top:144.1px;width:771.8px;height:23.54px;background:#fff"></div>
<div class="a" style="left:13.5px;top:167.14px;width:771.8px;height:1px;background:#e9e9e9"></div>
<div class="a" style="left:18.3px;top:149.27px;width:11.2px;height:11.2px;border:1px solid #dfe5ec;border-radius:2px"></div>
<div class="a" style="left:46.6px;top:149.57px;width:13.5px;height:12.4px;background:#2670a9;border-radius:2px"></div>
<svg style="left:49.5px;top:151.37px;" width="8" height="8" viewBox="0 0 14 14"><circle cx="5.8" cy="5.8" r="3.9" fill="none" stroke="#fff" stroke-width="2.5"/><path d="M8.8 8.8 L12.6 12.6" stroke="#fff" stroke-width="2.8" stroke-linecap="round"/></svg>
<div class="t" style="left:77.2px;top:149.97px;line-height:10px;font-size:7.3px;color:#555;letter-spacing:-0.22px">31/Mar/2023</div>
<div class="t" style="left:140px;top:149.97px;line-height:10px;font-size:7.3px;color:#555;letter-spacing:-0.22px">SC-0122456-003</div>
<div class="t" style="left:207.8px;top:149.97px;line-height:10px;font-size:7.3px;color:#555;letter-spacing:-0.22px">Cezar Vendor_test</div>
<div class="t" style="left:330.5px;top:149.97px;line-height:10px;font-size:7.3px;color:#555;letter-spacing:-0.22px">Tile Supply/Materials</div>
<div class="t" style="left:445.5px;top:149.97px;line-height:10px;font-size:7.3px;color:#555;letter-spacing:-0.22px">Subcontract</div>
<div class="t" style="left:507.6px;width:30px;text-align:right;top:149.97px;line-height:10px;font-size:7.3px;color:#555;letter-spacing:-0.22px">4</div>
<div class="t" style="left:546.9px;top:149.97px;line-height:10px;font-size:7.3px;color:#555;letter-spacing:-0.22px">200623-A111</div>
<div class="t" style="left:658.7px;top:149.97px;line-height:10px;font-size:7.3px;color:#555;letter-spacing:-0.22px">Approved</div>
<div class="t" style="left:721.6px;top:149.97px;line-height:10px;font-size:7.3px;color:#555;letter-spacing:-0.22px">$95.00</div>
<div class="a" style="left:13.5px;top:167.64px;width:771.8px;height:23.54px;background:#f9f9f9"></div>
<div class="a" style="left:13.5px;top:190.68px;width:771.8px;height:1px;background:#e9e9e9"></div>
<div class="a" style="left:18.3px;top:172.81px;width:11.2px;height:11.2px;border:1px solid #dfe5ec;border-radius:2px"></div>
<div class="a" style="left:46.6px;top:173.11px;width:13.5px;height:12.4px;background:#2670a9;border-radius:2px"></div>
<svg style="left:49.5px;top:174.91px;" width="8" height="8" viewBox="0 0 14 14"><circle cx="5.8" cy="5.8" r="3.9" fill="none" stroke="#fff" stroke-width="2.5"/><path d="M8.8 8.8 L12.6 12.6" stroke="#fff" stroke-width="2.8" stroke-linecap="round"/></svg>
<div class="t" style="left:77.2px;top:173.51px;line-height:10px;font-size:7.3px;color:#555;letter-spacing:-0.22px">31/Mar/2023</div>
<div class="t" style="left:140px;top:173.51px;line-height:10px;font-size:7.3px;color:#555;letter-spacing:-0.22px">1</div>
<div class="t" style="left:207.8px;top:173.51px;line-height:10px;font-size:7.3px;color:#555;letter-spacing:-0.22px">Cz Tile Depot</div>
<div class="t" style="left:330.5px;top:173.51px;line-height:10px;font-size:7.3px;color:#555;letter-spacing:-0.22px">Test Scaffolding</div>
<div class="t" style="left:445.5px;top:173.51px;line-height:10px;font-size:7.3px;color:#555;letter-spacing:-0.22px">Subcontract</div>
<div class="t" style="left:507.6px;width:30px;text-align:right;top:173.51px;line-height:10px;font-size:7.3px;color:#555;letter-spacing:-0.22px">7</div>
<div class="t" style="left:546.9px;top:173.51px;line-height:10px;font-size:7.3px;color:#555;letter-spacing:-0.22px">11</div>
<div class="t" style="left:658.7px;top:173.51px;line-height:10px;font-size:7.3px;color:#555;letter-spacing:-0.22px">Approved</div>
<div class="t" style="left:721.6px;top:173.51px;line-height:10px;font-size:7.3px;color:#555;letter-spacing:-0.22px">$0.00</div>
<div class="a" style="left:13.5px;top:191.18px;width:771.8px;height:23.54px;background:#fff"></div>
<div class="a" style="left:13.5px;top:214.22px;width:771.8px;height:1px;background:#e9e9e9"></div>
<div class="a" style="left:18.3px;top:196.35px;width:11.2px;height:11.2px;border:1px solid #dfe5ec;border-radius:2px"></div>
<div class="a" style="left:46.6px;top:196.65px;width:13.5px;height:12.4px;background:#2670a9;border-radius:2px"></div>
<svg style="left:49.5px;top:198.45px;" width="8" height="8" viewBox="0 0 14 14"><circle cx="5.8" cy="5.8" r="3.9" fill="none" stroke="#fff" stroke-width="2.5"/><path d="M8.8 8.8 L12.6 12.6" stroke="#fff" stroke-width="2.8" stroke-linecap="round"/></svg>
<div class="t" style="left:77.2px;top:197.05px;line-height:10px;font-size:7.3px;color:#555;letter-spacing:-0.22px">31/Mar/2023</div>
<div class="t" style="left:140px;top:197.05px;line-height:10px;font-size:7.3px;color:#555;letter-spacing:-0.22px">SC-0122456-003</div>
<div class="t" style="left:207.8px;top:197.05px;line-height:10px;font-size:7.3px;color:#555;letter-spacing:-0.22px">Cezar Vendor_test</div>
<div class="t" style="left:330.5px;top:197.05px;line-height:10px;font-size:7.3px;color:#555;letter-spacing:-0.22px">Tile Supply/Materials</div>
<div class="t" style="left:445.5px;top:197.05px;line-height:10px;font-size:7.3px;color:#555;letter-spacing:-0.22px">Subcontract</div>
<div class="t" style="left:507.6px;width:30px;text-align:right;top:197.05px;line-height:10px;font-size:7.3px;color:#555;letter-spacing:-0.22px">5</div>
<div class="t" style="left:546.9px;top:197.05px;line-height:10px;font-size:7.3px;color:#555;letter-spacing:-0.22px">200623-A122</div>
<div class="t" style="left:658.7px;top:197.05px;line-height:10px;font-size:7.3px;color:#555;letter-spacing:-0.22px">Approved</div>
<div class="t" style="left:721.6px;top:197.05px;line-height:10px;font-size:7.3px;color:#555;letter-spacing:-0.22px">$95.00</div>
<div class="a" style="left:13.5px;top:214.72px;width:771.8px;height:23.54px;background:#f9f9f9"></div>
<div class="a" style="left:13.5px;top:237.76px;width:771.8px;height:1px;background:#e9e9e9"></div>
<div class="a" style="left:18.3px;top:219.89px;width:11.2px;height:11.2px;border:1px solid #dfe5ec;border-radius:2px"></div>
<div class="a" style="left:46.6px;top:220.19px;width:13.5px;height:12.4px;background:#2670a9;border-radius:2px"></div>
<svg style="left:49.5px;top:221.99px;" width="8" height="8" viewBox="0 0 14 14"><circle cx="5.8" cy="5.8" r="3.9" fill="none" stroke="#fff" stroke-width="2.5"/><path d="M8.8 8.8 L12.6 12.6" stroke="#fff" stroke-width="2.8" stroke-linecap="round"/></svg>
<div class="t" style="left:77.2px;top:220.59px;line-height:10px;font-size:7.3px;color:#555;letter-spacing:-0.22px">31/Mar/2023</div>
<div class="t" style="left:140px;top:220.59px;line-height:10px;font-size:7.3px;color:#555;letter-spacing:-0.22px">SC-0122456-002</div>
<div class="t" style="left:207.8px;top:220.59px;line-height:10px;font-size:7.3px;color:#555;letter-spacing:-0.22px">Cz Tile Depot</div>
<div class="t" style="left:330.5px;top:220.59px;line-height:10px;font-size:7.3px;color:#555;letter-spacing:-0.22px">Metal Fences</div>
<div class="t" style="left:445.5px;top:220.59px;line-height:10px;font-size:7.3px;color:#555;letter-spacing:-0.22px">Subcontract</div>
<div class="t" style="left:507.6px;width:30px;text-align:right;top:220.59px;line-height:10px;font-size:7.3px;color:#555;letter-spacing:-0.22px">6</div>
<div class="t" style="left:546.9px;top:220.59px;line-height:10px;font-size:7.3px;color:#555;letter-spacing:-0.22px">6</div>
<div class="t" style="left:658.7px;top:220.59px;line-height:10px;font-size:7.3px;color:#555;letter-spacing:-0.22px">Approved</div>
<div class="t" style="left:721.6px;top:220.59px;line-height:10px;font-size:7.3px;color:#555;letter-spacing:-0.22px">$200.00</div>
<div class="a" style="left:13px;top:5px;width:1px;height:235px;background:#e9e9e9"></div>
<div class="a" style="left:33.7px;top:5px;width:1px;height:235px;background:#e9e9e9"></div>
<div class="a" style="left:71.9px;top:5px;width:1px;height:235px;background:#e9e9e9"></div>
<div class="a" style="left:134.7px;top:5px;width:1px;height:235px;background:#e9e9e9"></div>
<div class="a" style="left:202.5px;top:5px;width:1px;height:235px;background:#e9e9e9"></div>
<div class="a" style="left:325.2px;top:5px;width:1px;height:235px;background:#e9e9e9"></div>
<div class="a" style="left:440.2px;top:5px;width:1px;height:235px;background:#e9e9e9"></div>
<div class="a" style="left:501.5px;top:5px;width:1px;height:235px;background:#e9e9e9"></div>
<div class="a" style="left:541.6px;top:5px;width:1px;height:235px;background:#e9e9e9"></div>
<div class="a" style="left:653.4px;top:5px;width:1px;height:235px;background:#e9e9e9"></div>
<div class="a" style="left:716.3px;top:5px;width:1px;height:235px;background:#e9e9e9"></div>
<div class="a" style="left:784.8px;top:5px;width:1px;height:235px;background:#e9e9e9"></div>
<div class="a" style="left:13.5px;top:4.5px;width:771.8px;height:1px;background:#e9e9e9"></div>
<div class="a" style="left:13.5px;top:25.3px;width:771.8px;height:1.5px;background:#e0e0e0"></div>
</div>
<div class="a" style="left:940.8px;top:213.4px;width:10.2px;height:397.6px;background:#f1f1f1"></div>
<div class="a" style="left:941.8px;top:224px;width:8.4px;height:214.8px;background:#c1c1c1"></div>
<svg style="left:943.3px;top:217.7px;" width="5.4" height="3.2" viewBox="0 0 10 6"><path d="M0 6 L5 0 L10 6 Z" fill="#a3a3a3"/></svg>
<svg style="left:943.3px;top:603.6px;" width="5.4" height="3.2" viewBox="0 0 10 6"><path d="M0 0 L5 6 L10 0 Z" fill="#505050"/></svg>
<div class="a" style="left:141px;top:600px;width:800px;height:11px;background:linear-gradient(rgba(0,0,0,0),rgba(0,0,0,.07))"></div>
<div class="a" style="left:140.2px;top:611px;width:810.8px;height:30px;background:#fff;box-shadow:0 -1px 2px rgba(0,0,0,.08)"></div>
<div class="a" style="left:146.3px;top:617px;width:44.3px;height:18.3px;background:#db7d07;border-radius:2px"></div>
<div class="t" style="left:147.3px;width:50px;text-align:center;top:621.4px;line-height:10px;font-size:7.4px;color:#fff;letter-spacing:-0.3px;-webkit-text-stroke:0.3px #fff">Restart</div>
<svg style="left:152.9px;top:622.5px;" width="7.2" height="7.2" viewBox="0 0 14 14"><path d="M3.6 3.6 A5 5 0 1 1 2.2 8.6" fill="none" stroke="#fff" stroke-width="2.4"/><path d="M0.8 0.8 L6.6 1.6 L1.4 6.6 Z" fill="#fff"/></svg>
<div class="a" style="left:869.4px;top:617px;width:37.6px;height:18.3px;background:#2670a9;border-radius:2px"></div>
<div class="a" style="left:909px;top:617px;width:36.5px;height:18.3px;background:#2670a9;border-radius:2px"></div>
<div class="t" style="left:872.3px;width:40px;text-align:center;top:621.5px;line-height:10px;font-size:7.4px;color:#fff;letter-spacing:-0.2px;-webkit-text-stroke:0.3px #fff">Prev.</div>
<div class="t" style="left:902.6px;width:40px;text-align:center;top:621.5px;line-height:10px;font-size:7.4px;color:#fff;letter-spacing:-0.2px;-webkit-text-stroke:0.3px #fff">Next</div>
<svg style="left:876.4px;top:622.7px;" width="6.8" height="6.8" viewBox="0 0 13 13"><path d="M0.3 6.5 L6.3 0.5 L8.6 2.8 L6.4 4.7 L12.7 4.7 L12.7 8.3 L6.4 8.3 L8.6 10.2 L6.3 12.5 Z" fill="#fff"/></svg>
<svg style="left:932px;top:622.7px;" width="6.6" height="6.8" viewBox="0 0 13 13"><path d="M12.7 6.5 L6.7 0.5 L4.4 2.8 L6.6 4.7 L0.3 4.7 L0.3 8.3 L6.6 8.3 L4.4 10.2 L6.7 12.5 Z" fill="#fff"/></svg>
<div class="a" style="left:958.6px;top:43px;width:1.4px;height:605px;background:#d5d9de"></div>
<svg style="left:895.6px;top:53.6px;" width="8" height="8.2" viewBox="0 0 20 20"><path d="M3.4 12.5 L3.4 9.6 A6.6 6.6 0 0 1 16.6 9.6 L16.6 12.5" fill="none" stroke="#fff" stroke-width="1.8"/><rect x="1.8" y="10.5" width="3.2" height="5.2" rx="1.2" fill="#fff"/><rect x="15" y="10.5" width="3.2" height="5.2" rx="1.2" fill="#fff"/><path d="M16 15.5 Q15.8 18 12.5 18" fill="none" stroke="#fff" stroke-width="1.6"/><rect x="9" y="16.2" width="4" height="3.2" rx="1.2" fill="#fff"/></svg>
<svg style="left:920.6px;top:54.1px;" width="7.6" height="7.6" viewBox="0 0 20 20"><circle cx="10" cy="10" r="9.6" fill="#fff"/><path d="M6.8 7.6 C6.8 3.8 13.2 3.8 13.2 7.6 C13.2 10 10 9.8 10 12.6" fill="none" stroke="#eb9b33" stroke-width="2.6"/><rect x="8.6" y="14" width="2.8" height="2.8" fill="#eb9b33"/></svg>
<div class="a" style="left:936.8px;top:48.5px;width:0.8px;height:19.3px;background:rgba(255,255,255,.25)"></div>
<svg style="left:945.3px;top:54.6px;" width="6.4" height="6.6" viewBox="0 0 14 16"><circle cx="7" cy="4.2" r="3.8" fill="#fff"/><path d="M0.5 15.5 L0.5 12.5 Q0.5 8.8 4 8.6 L10 8.6 Q13.5 8.8 13.5 12.5 L13.5 15.5 Z" fill="#fff"/></svg>
<svg style="left:841.1px;top:654.9px;" width="50.2" height="50.2" viewBox="0 0 100 100"><defs><clipPath id="cc"><circle cx="50" cy="50" r="49.6"/></clipPath></defs><circle cx="50" cy="50" r="49.6" fill="#74787b"/><g clip-path="url(#cc)"><path d="M20.1 9.3 L28 11.5 L28 100 L20.1 100 Z M29.7 12.2 L36.9 14.3 L36.9 100 L29.7 100 Z M38.7 15.8 L45.9 17.9 L45.9 49.5 L38.7 51.6 Z M47.3 19.1 L54.1 20.8 L54.1 47.3 L47.3 48.8 Z M55.5 22.2 L63.6 24.4 L63.6 44.5 L55.5 45.9 Z" fill="#f6ec00"/><path d="M63.1 45.2 L70.3 47.3 L70.3 100 L63.1 100 Z M71.7 48.8 L78.9 50.9 L78.9 100 L71.7 100 Z M80.3 56 L88 58.8 L88 100 L80.3 100 Z" fill="#d6c828"/></g></svg>
<svg style="left:0;top:0" width="960" height="720" viewBox="0 0 960 720"><path d="M897.20 675.60 L897.20 686.80 M899.40 686.80 L899.40 675.60 L908.00 686.80 L908.00 675.60 M908.00 675.60 L915.80 675.60 M911.90 675.60 L911.90 686.80 M921.50 675.60 L917.30 675.60 L917.30 686.80 L921.50 686.80 M917.30 681.20 L921.00 681.20 M923.9 686.80 L923.9 675.60 L926.6 675.60 C929.6 675.60 929.6 681.50 926.6 681.50 L923.9 681.50 M926.2 681.50 L929.4 686.80 M936.60 675.60 L932.60 675.60 L932.60 686.80 M932.60 681.20 L935.90 681.20 M936.60 675.60 L941.70 681.40 L946.80 675.60 M941.70 681.40 L941.70 686.80" fill="none" stroke="#c8c8c8" stroke-width="1.15" stroke-linejoin="miter"/></svg>
</body></html>
